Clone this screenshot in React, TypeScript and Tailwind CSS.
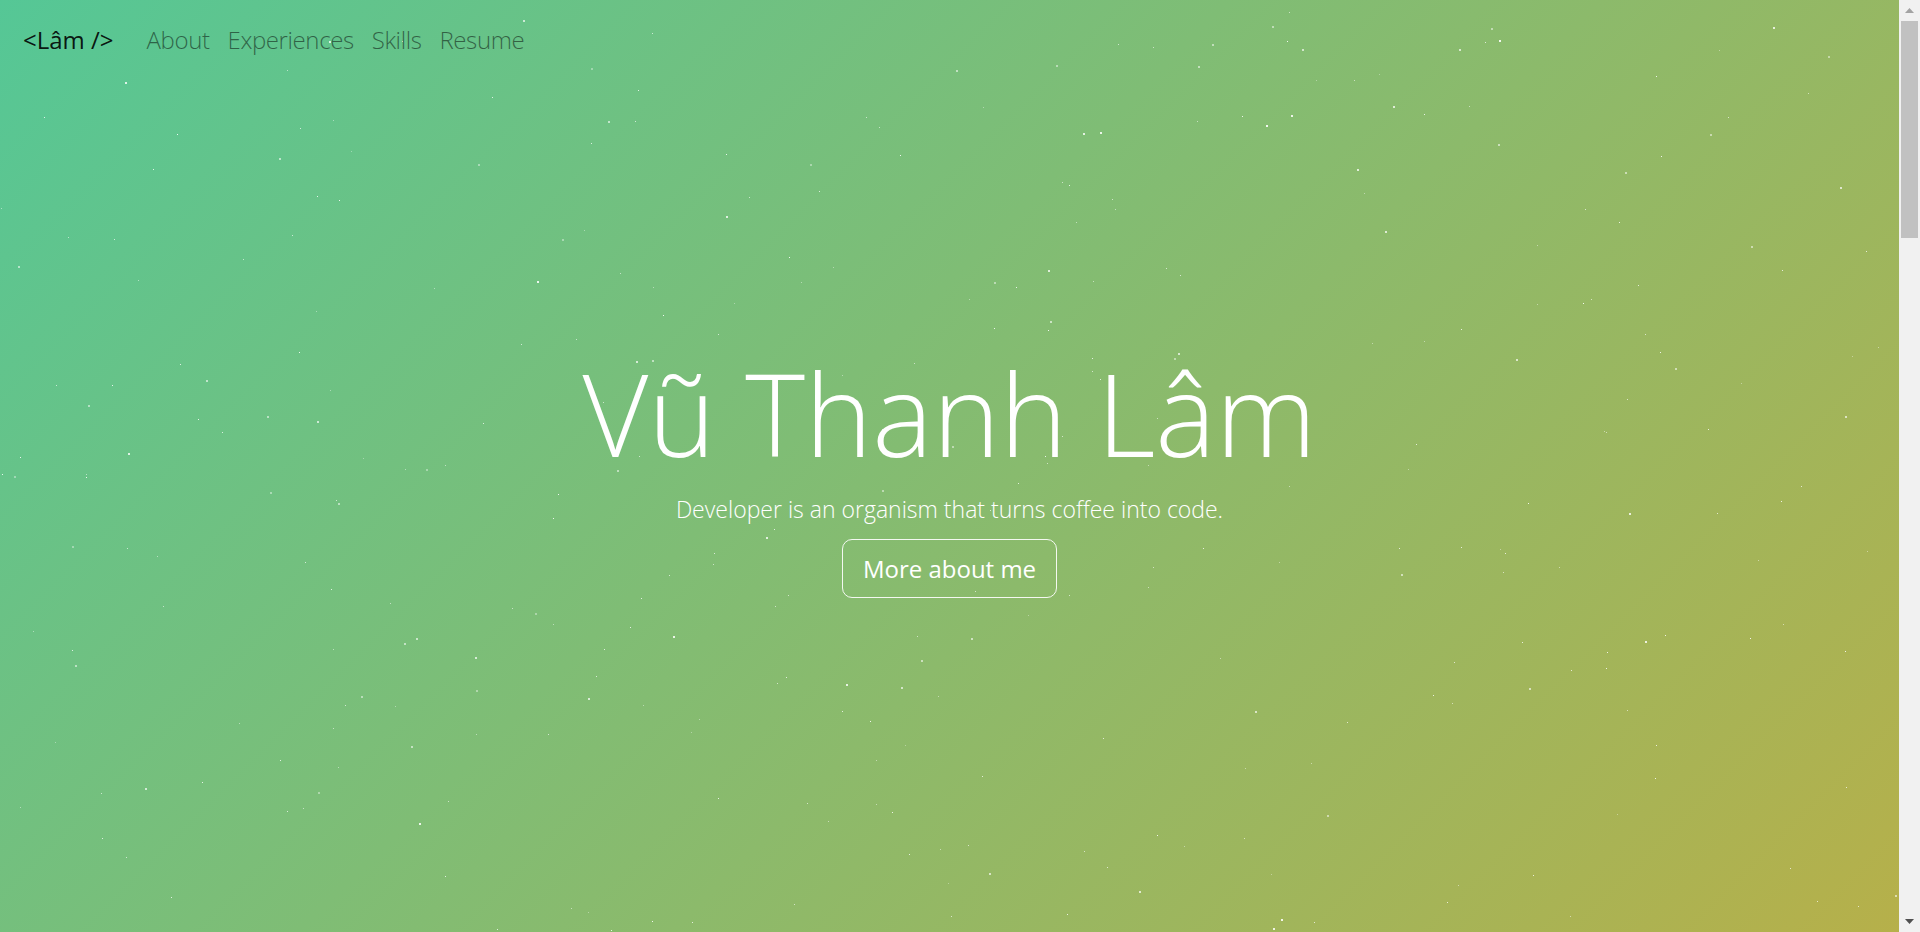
import { useMemo } from 'react'

const navLinks = ['About', 'Experiences', 'Skills', 'Resume']

function makeStars(count: number, w: number, h: number) {
  let seed = 1337
  const rand = () => {
    seed = (seed * 16807) % 2147483647
    return (seed - 1) / 2147483646
  }
  const stars = []
  for (let i = 0; i < count; i++) {
    stars.push({
      x: Math.round(rand() * w),
      y: Math.round(rand() * h),
      s: rand() > 0.7 ? 2 : 1,
      o: 0.35 + rand() * 0.55,
    })
  }
  return stars
}

function Stars() {
  const stars = useMemo(() => makeStars(340, 1899, 932), [])
  return (
    <svg className="absolute inset-0 h-full w-full pointer-events-none" viewBox="0 0 1899 932" preserveAspectRatio="none">
      {stars.map((st, i) => (
        <rect key={i} x={st.x} y={st.y} width={st.s} height={st.s} fill="#ffffff" opacity={st.o} />
      ))}
    </svg>
  )
}

// classic windows-style scrollbar, as seen on the screenshot
function ScrollBar() {
  return (
    <aside className="flex h-screen w-[21px] shrink-0 flex-col bg-[#f1f1f1]">
      <div className="flex h-[21px] items-center justify-center">
        <svg width="9" height="5" viewBox="0 0 9 5">
          <path d="M4.5 0 L9 5 L0 5 Z" fill="#a3a3a3" />
        </svg>
      </div>
      <div className="mx-[2px] h-[217px] bg-[#c1c1c1]"></div>
      <div className="flex-1"></div>
      <div className="flex h-[21px] items-center justify-center">
        <svg width="9" height="5" viewBox="0 0 9 5">
          <path d="M0 0 L9 0 L4.5 5 Z" fill="#505050" />
        </svg>
      </div>
    </aside>
  )
}

export default function App() {
  return (
    <div className="flex h-screen overflow-hidden font-['Segoe_UI','Open_Sans',sans-serif] font-light">
      <main className="flex-1 overflow-y-auto [scrollbar-width:none]">
        {/* Hero */}
        <section className="relative h-screen overflow-hidden bg-[linear-gradient(135deg,#55c796_0%,#b6b04a_100%)]">
          <Stars />

          {/* Navbar */}
          <nav className="relative flex items-center px-4 pt-[13px] pb-2">
            <a className="mr-6 py-[6px] pl-[7px] text-[24px] font-normal leading-[42px] text-black/90">&lt;Lâm /&gt;</a>
            <ul className="flex">
              {navLinks.map((link) => (
                <li key={link}>
                  <a className="block px-[9px] py-[6px] text-[24px] leading-[42px] tracking-[-0.4px] text-black/50">{link}</a>
                </li>
              ))}
            </ul>
          </nav>

          {/* Intro */}
          <div className="relative flex flex-col items-center pt-[270px] text-center text-white">
            <h1 className="text-[114px] leading-[136px] font-light">Vũ Thanh Lâm</h1>
            <p className="mt-[10px] text-[23px] leading-[36px] font-light">
              Developer is an organism that turns coffee into code.
            </p>
            <button className="mt-[12px] rounded-[10px] border border-white/90 px-[20px] py-[10px] text-[24px] leading-[37px] font-normal text-white">
              More about me
            </button>
          </div>
        </section>
      </main>
      <ScrollBar />
    </div>
  )
}
